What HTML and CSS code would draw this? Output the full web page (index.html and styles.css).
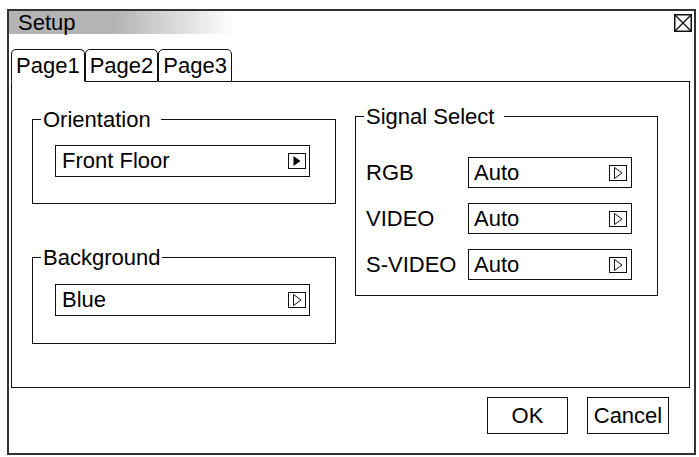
FILE: index.html
```html
<!DOCTYPE html>
<html lang="en">
<head>
  <meta charset="UTF-8">
  <title>Setup</title>
  <link rel="stylesheet" href="styles.css">
</head>
<body>
  <div class="dialog">
    <div class="titlebar">
      <span class="title">Setup</span>
      <svg class="close" width="18" height="18" viewBox="0 0 18 18">
        <rect x="0.75" y="0.75" width="16.5" height="16.5" fill="none" stroke="#111" stroke-width="1.5"/>
        <path d="M1 1 L17 17 M17 1 L1 17" stroke="#111" stroke-width="1.3"/>
      </svg>
    </div>

    <div class="tabs">
      <div class="tab active">Page1</div>
      <div class="tab">Page2</div>
      <div class="tab">Page3</div>
      <div class="tab-fill"></div>
    </div>

    <div class="panel">
      <div class="col-left">
        <fieldset class="group group-orient">
          <legend class="legend-wide">Orientation</legend>
          <div class="field">
            <span>Front Floor</span>
            <svg class="arrow" width="18" height="16" viewBox="0 0 18 16">
              <rect x="0.5" y="0.5" width="17" height="15" fill="none" stroke="#111"/>
              <polygon points="5.5,3 12.5,8 5.5,13" fill="#000"/>
            </svg>
          </div>
        </fieldset>

        <fieldset class="group group-bg">
          <legend>Background</legend>
          <div class="field">
            <span>Blue</span>
            <svg class="arrow" width="18" height="16" viewBox="0 0 18 16">
              <rect x="0.5" y="0.5" width="17" height="15" fill="none" stroke="#111"/>
              <polygon points="5.5,2.5 13,8 5.5,13.5" fill="none" stroke="#111"/>
            </svg>
          </div>
        </fieldset>
      </div>

      <fieldset class="group group-signal">
        <legend class="legend-wide">Signal Select</legend>
        <div class="signal-rows">
          <span class="signal-label">RGB</span>
          <div class="field field-small">
            <span>Auto</span>
            <svg class="arrow" width="18" height="16" viewBox="0 0 18 16">
              <rect x="0.5" y="0.5" width="17" height="15" fill="none" stroke="#111"/>
              <polygon points="5.5,2.5 13,8 5.5,13.5" fill="none" stroke="#111"/>
            </svg>
          </div>
          <span class="signal-label">VIDEO</span>
          <div class="field field-small">
            <span>Auto</span>
            <svg class="arrow" width="18" height="16" viewBox="0 0 18 16">
              <rect x="0.5" y="0.5" width="17" height="15" fill="none" stroke="#111"/>
              <polygon points="5.5,2.5 13,8 5.5,13.5" fill="none" stroke="#111"/>
            </svg>
          </div>
          <span class="signal-label">S-VIDEO</span>
          <div class="field field-small">
            <span>Auto</span>
            <svg class="arrow" width="18" height="16" viewBox="0 0 18 16">
              <rect x="0.5" y="0.5" width="17" height="15" fill="none" stroke="#111"/>
              <polygon points="5.5,2.5 13,8 5.5,13.5" fill="none" stroke="#111"/>
            </svg>
          </div>
        </div>
      </fieldset>
    </div>

    <div class="buttons">
      <button class="btn btn-ok">OK</button>
      <button class="btn btn-cancel">Cancel</button>
    </div>
  </div>
</body>
</html>
```

FILE: styles.css
```css
* {
  box-sizing: border-box;
}
body {
  margin: 0;
  background: #fff;
  font-family: "Liberation Sans", Arial, sans-serif;
  font-size: 22px;
  color: #000;
}
.dialog {
  margin: 9px 0 0 7px;
  width: 689px;
  height: 446px;
  border: 2px solid #333;
}
.titlebar {
  display: flex;
  align-items: center;
  justify-content: space-between;
  height: 23px;
  padding: 0 2px 0 9px;
  background: linear-gradient(to right, #b4b4b4 0, #b4b4b4 105px, #fff 225px);
}
.title {
  line-height: 23px;
}
.close {
  display: block;
}
.tabs {
  display: flex;
  margin: 15px 4px 0 2px;
  height: 33px;
}
.tab {
  padding: 0 4px;
  line-height: 31px;
  border: 1px solid #111;
  border-radius: 5px 5px 0 0;
  background: #fff;
}
.tab.active {
  border-bottom-color: #fff;
}
.tab-fill {
  flex: 1;
  border-bottom: 1px solid #111;
}
.panel {
  display: flex;
  align-items: flex-start;
  gap: 19px;
  margin: 0 4px 0 2px;
  height: 306px;
  padding: 23px 0 0 20px;
  border: 1px solid #111;
  border-top: none;
}
.col-left {
  display: flex;
  flex-direction: column;
  gap: 42px;
  margin-top: 3px;
}
.group {
  margin: 0;
  padding: 0;
  min-width: 0;
  border: 1px solid #111;
}
.group legend {
  margin-left: 8px;
  padding: 0 2px;
  line-height: 23px;
}
.group legend.legend-wide {
  padding-right: 10px;
}
.group-orient {
  width: 304px;
  height: 96px;
}
.group-orient .field {
  margin: 14px 0 0 22px;
}
.group-bg {
  width: 304px;
  height: 98px;
}
.group-bg .field {
  margin: 15px 0 0 22px;
}
.field {
  display: flex;
  align-items: center;
  justify-content: space-between;
  width: 255px;
  height: 32px;
  padding: 0 3px 0 6px;
  border: 1px solid #111;
  line-height: 30px;
}
.arrow {
  display: block;
}
.group-signal {
  width: 303px;
  height: 191px;
}
.signal-rows {
  display: grid;
  grid-template-columns: 102px 164px;
  row-gap: 15px;
  align-items: center;
  margin: 29px 0 0 10px;
}
.field-small {
  width: 164px;
  height: 31px;
  padding: 0 4px 0 5px;
}
.buttons {
  display: flex;
  justify-content: flex-end;
  gap: 19px;
  margin: 9px 25px 0 0;
}
.btn {
  height: 37px;
  padding: 0;
  font-family: inherit;
  font-size: 22px;
  color: #000;
  background: #fff;
  border: 1px solid #111;
  border-radius: 0;
}
.btn-ok {
  width: 81px;
}
.btn-cancel {
  width: 82px;
}
```
